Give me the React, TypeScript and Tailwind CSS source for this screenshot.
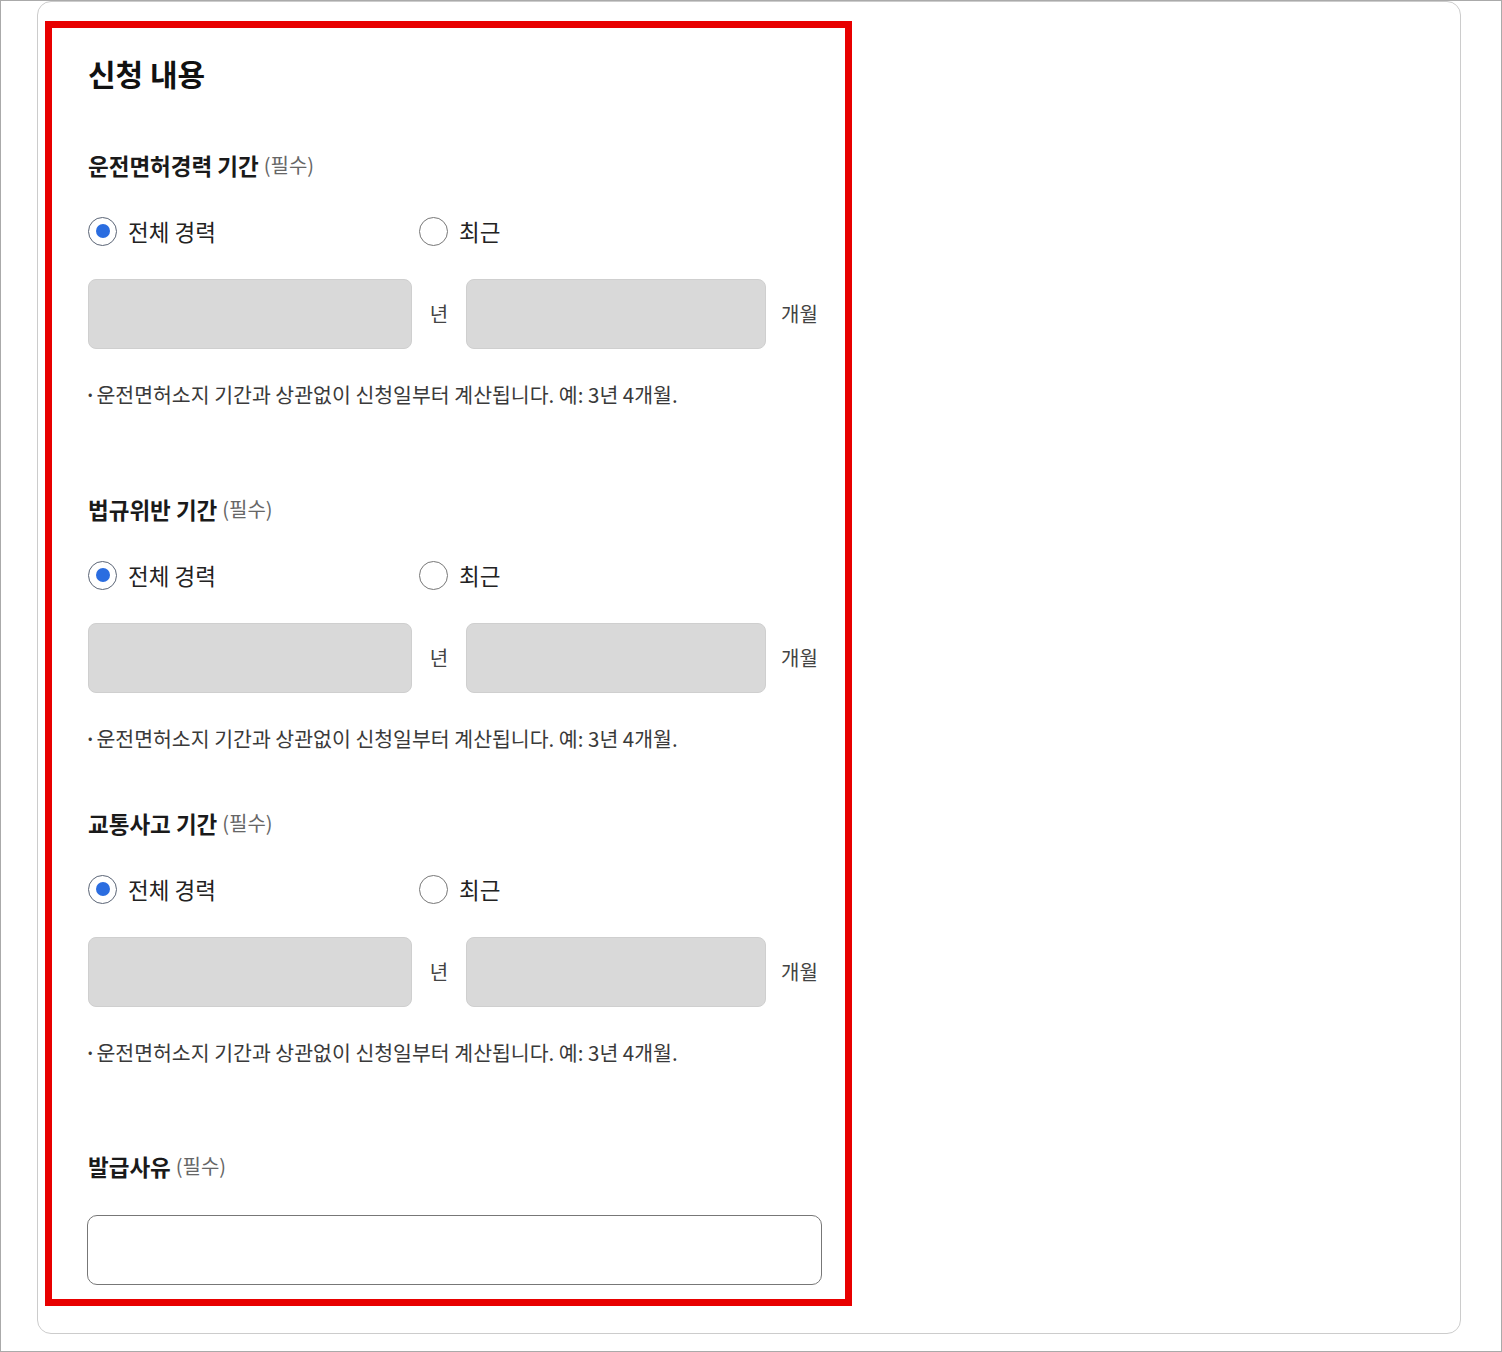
import React from "react";

const font = { fontFamily: '"Noto Sans CJK KR", "Noto Sans", sans-serif' };

function Radio({ checked, label }: { checked?: boolean; label: string }) {
  return (
    <label className="flex h-[30px] items-center gap-[11px]">
      <span
        className={
          "flex h-[29px] w-[29px] items-center justify-center rounded-full border-[1.5px] bg-white " +
          (checked ? "border-[#5b6576]" : "border-[#777]")
        }
      >
        {checked && <span className="h-[14px] w-[14px] rounded-full bg-[#2b6de0]" />}
      </span>
      <span className="text-[22.5px] leading-[30px] text-[#222]">{label}</span>
    </label>
  );
}

function Label({ title }: { title: string }) {
  return (
    <h3 className="flex h-[30px] items-center text-[22.5px] font-bold leading-[30px] text-[#1a1a1a]">
      {title}
      <span className="ml-[5px] text-[20px] font-normal leading-[30px] text-[#666]">(필수)</span>
    </h3>
  );
}

function Section({ title, gapTop }: { title: string; gapTop: string }) {
  return (
    <div className={gapTop}>
      <Label title={title} />
      <div className="mt-[36px] flex h-[30px] items-center">
        <div className="w-[331px]">
          <Radio checked label="전체 경력" />
        </div>
        <Radio label="최근" />
      </div>
      <div className="mt-[33px] flex h-[70px] items-center">
        <input
          type="text"
          disabled
          className="h-[70px] w-[324px] rounded-[8px] border border-[#cfcfcf] bg-[#d9d9d9]"
        />
        <span className="w-[54px] text-center text-[20px] leading-[28px] text-[#444]">년</span>
        <input
          type="text"
          disabled
          className="h-[70px] w-[300px] rounded-[8px] border border-[#cfcfcf] bg-[#d9d9d9]"
        />
        <span className="ml-[15px] text-[20px] leading-[28px] text-[#444]">개월</span>
      </div>
      <p className="mt-[31px] flex h-[28px] items-center text-[20.5px] leading-[28px] text-[#3a3a3a]">
        <span className="mr-[4px] text-[13px] leading-[28px]">•</span>
        운전면허소지 기간과 상관없이 신청일부터 계산됩니다. 예: 3년 4개월.
      </p>
    </div>
  );
}

export default function App() {
  return (
    <div style={font} className="h-[1352px] w-[1502px] border border-[#aaa] bg-white">
      <div className="ml-[36px] h-[1333px] w-[1424px] rounded-[14px] border border-[#ccc] bg-white">
        <div className="ml-[7px] mt-[19px] w-[807px] border-[7px] border-[#e80000] bg-white pb-[14px] pl-[36px] pr-[24px] pt-[25px]">
          <h2 className="flex h-[40px] items-center text-[30px] font-bold leading-[40px] text-[#111]">신청 내용</h2>
          <Section title="운전면허경력 기간" gapTop="mt-[57px]" />
          <Section title="법규위반 기간" gapTop="mt-[86px]" />
          <Section title="교통사고 기간" gapTop="mt-[56px]" />
          <div className="mt-[85px]">
            <Label title="발급사유" />
            <textarea className="mt-[34px] -ml-px block h-[70px] w-[735px] resize-none rounded-[10px] border border-[#777] bg-white" />
          </div>
        </div>
      </div>
    </div>
  );
}
